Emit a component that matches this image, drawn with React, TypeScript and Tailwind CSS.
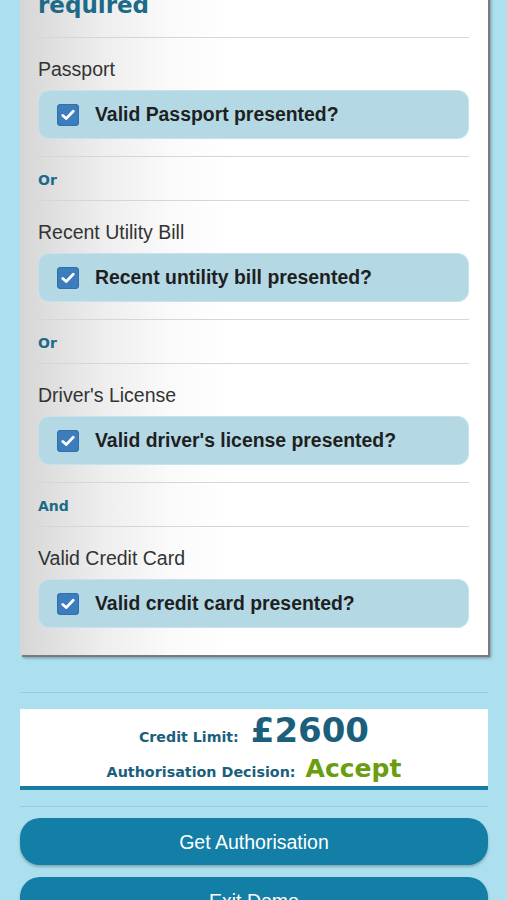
import React from "react";

const verdana = { fontFamily: '"DejaVu Sans", Verdana, sans-serif' };
const arial = { fontFamily: '"Liberation Sans", Arial, Helvetica, sans-serif' };

function Check() {
  return (
    <div className="w-[22px] h-[22px] rounded-[4px] bg-[#3b7dbd] flex items-center justify-center shrink-0 shadow-[inset_0_0_0_1px_#336fa8]">
      <svg width="14" height="12" viewBox="0 0 14 12">
        <path d="M1.8 6.4 L5.2 9.6 L12.2 2.2" fill="none" stroke="#ffffff" strokeWidth="2.8" strokeLinecap="round" strokeLinejoin="round" />
      </svg>
    </div>
  );
}

function Section({ label, question, conj }: { label: string; question: string; conj?: string }) {
  return (
    <>
      <div className="mt-[20px] text-[19.5px] leading-[22px] text-[#333333]" style={arial}>
        {label}
      </div>
      <div className="mt-[10px] h-[49px] rounded-[11px] bg-[#b4d9e5] border border-[#c6e2ea] flex items-center pl-[18px] gap-[16px]">
        <Check />
        <span className="text-[19.4px] font-bold text-[#1f1f1f] pt-[1px]" style={arial}>
          {question}
        </span>
      </div>
      {conj && (
        <>
          <div className="mt-[17px] h-px bg-[#d6d6d6]" />
          <div className="mt-[15px] text-[14px] leading-[16px] font-bold text-[#1b6a88]" style={verdana}>
            {conj}
          </div>
          <div className="mt-[12px] h-px bg-[#d6d6d6]" />
        </>
      )}
    </>
  );
}

export default function App() {
  return (
    <div className="w-full h-[900px] overflow-hidden bg-[#ade0ef] pl-[20px] pr-[19px]">
      <div className="mt-[-20px] pt-[12px] pl-[18px] pr-[19px] pb-[27px] bg-[linear-gradient(to_right,#d6d6d6,#eeeeee_18%,#fafafa_32%,#ffffff_45%)] shadow-[2px_2px_0_#7a7a7a,3px_3px_3px_rgba(0,0,0,0.35)]">
        <div className="text-[23px] leading-[26px] font-bold text-[#1b6a88]" style={verdana}>
          required
        </div>
        <div className="mt-[19px] h-px bg-[#d6d6d6]" />
        <Section label="Passport" question="Valid Passport presented?" conj="Or" />
        <Section label="Recent Utility Bill" question="Recent untility bill presented?" conj="Or" />
        <Section label="Driver's License" question="Valid driver's license presented?" conj="And" />
        <Section label="Valid Credit Card" question="Valid credit card presented?" />
      </div>

      <div className="mt-[37px] h-px bg-[#98cbdc]" />

      <div className="mt-[16px] h-[81px] bg-white border-b-[4px] border-[#1a7ba3] flex flex-col items-center justify-center" style={verdana}>
        <div className="flex items-baseline gap-[12px] leading-[38px] mt-[1px]">
          <span className="text-[14.2px] font-bold text-[#1b5f7d]">Credit Limit:</span>
          <span className="text-[34px] font-bold text-[#1b5f7d]">£2600</span>
        </div>
        <div className="flex items-baseline gap-[10px] leading-[28px] -mt-[1px]">
          <span className="text-[14.3px] font-bold text-[#1b5f7d]">Authorisation Decision:</span>
          <span className="text-[25px] font-bold text-[#6a9d10]">Accept</span>
        </div>
      </div>

      <div className="mt-[16px] h-px bg-[#98cbdc]" />

      <button className="mt-[11px] w-full h-[47px] rounded-[20px] bg-[#137ea6] text-white text-[19.5px] pt-[3px] shadow-[0_2px_3px_rgba(0,0,0,0.25)] flex items-center justify-center" style={arial}>
        Get Authorisation
      </button>
      <button className="mt-[12px] w-full h-[47px] rounded-[20px] bg-[#137ea6] text-white text-[19.5px] pt-[3px] shadow-[0_2px_3px_rgba(0,0,0,0.25)] flex items-center justify-center" style={arial}>
        Exit Demo
      </button>
    </div>
  );
}
